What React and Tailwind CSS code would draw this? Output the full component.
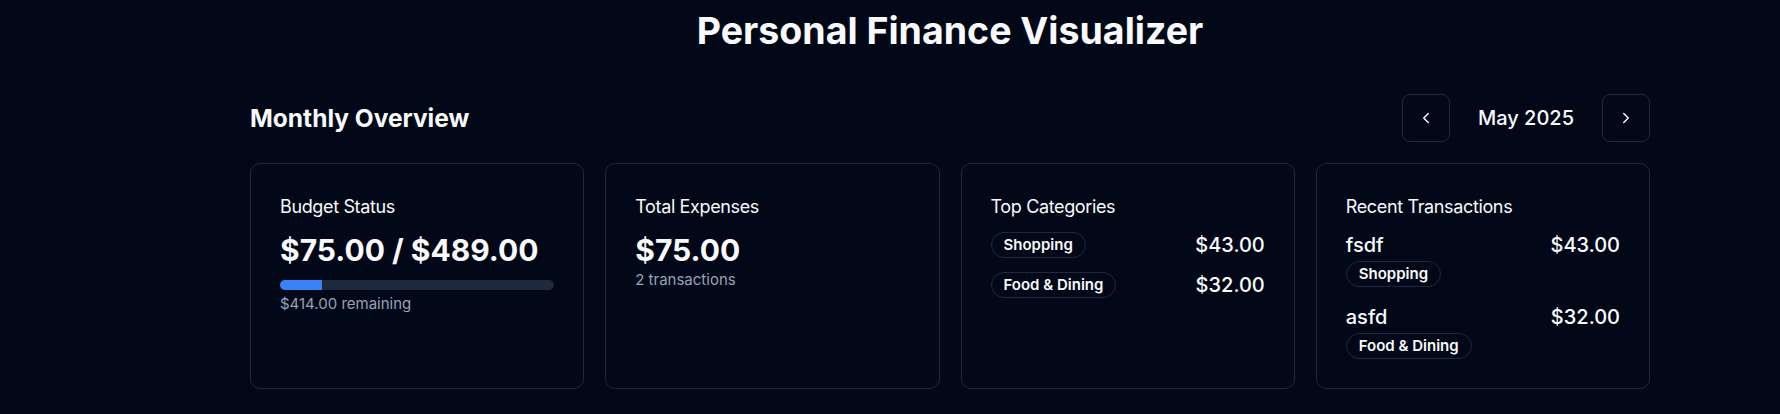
import React from "react";
import { ChevronLeft, ChevronRight } from "lucide-react";

function Badge({ children }) {
  return (
    <span className="inline-flex items-center rounded-full border border-[#1e293b] px-3 py-[2px] text-[15px] leading-5 font-semibold text-[#f8fafc]">
      {children}
    </span>
  );
}

function Card({ title, children }) {
  return (
    <div className="rounded-[10px] border border-[#1e293b] p-[29px]">
      <div className="text-lg leading-7 font-normal tracking-[-0.02em] text-[#f8fafc]">{title}</div>
      {children}
    </div>
  );
}

export default function App() {
  const spent = 75;
  const budget = 489;
  const pct = (spent / budget) * 100;
  return (
    <div className="min-h-screen bg-[#020817] text-[#f8fafc] font-[Inter,sans-serif] pl-[120px]">
      <div className="mx-auto max-w-[1400px]">
        <h1 className="pt-2 text-center text-[37.5px] leading-[46px] font-bold">
          Personal Finance Visualizer
        </h1>
        <div className="mt-10 flex h-12 items-center justify-between">
          <h2 className="text-[24.5px] leading-8 font-bold">Monthly Overview</h2>
          <div className="flex items-center">
            <button className="flex h-12 w-12 items-center justify-center rounded-lg border border-[#1e293b]">
              <ChevronLeft size={18} strokeWidth={2} />
            </button>
            <span className="mx-7 text-xl leading-7 font-medium">May 2025</span>
            <button className="flex h-12 w-12 items-center justify-center rounded-lg border border-[#1e293b]">
              <ChevronRight size={18} strokeWidth={2} />
            </button>
          </div>
        </div>
        <div className="mt-[21px] grid grid-cols-4 gap-[21px]">
          <Card title="Budget Status">
            <div className="mt-[11px] text-3xl leading-9 font-bold">$75.00 / $489.00</div>
            <div className="mt-3 h-2.5 w-full overflow-hidden rounded-full bg-[#1e293b]">
              <div className="h-full bg-[#3b82f6]" style={{ width: `${pct}%` }} />
            </div>
            <div className="mt-1 text-[15px] leading-5 text-[#94a3b8]">$414.00 remaining</div>
          </Card>
          <Card title="Total Expenses">
            <div className="mt-[11px] text-3xl leading-9 font-bold">$75.00</div>
            <div className="mt-0.5 text-[15px] leading-5 text-[#94a3b8]">2 transactions</div>
          </Card>
          <Card title="Top Categories">
            <div className="mt-[10px] flex flex-col gap-3">
              <div className="flex h-7 items-center justify-between">
                <Badge>Shopping</Badge>
                <span className="text-xl leading-7 font-medium">$43.00</span>
              </div>
              <div className="flex h-7 items-center justify-between">
                <Badge>Food &amp; Dining</Badge>
                <span className="text-xl leading-7 font-medium">$32.00</span>
              </div>
            </div>
          </Card>
          <Card title="Recent Transactions">
            <div className="mt-[10px] flex flex-col gap-4">
              <div>
                <div className="flex items-center justify-between text-xl leading-7 font-medium">
                  <span>fsdf</span>
                  <span>$43.00</span>
                </div>
                <div className="mt-[2px]">
                  <Badge>Shopping</Badge>
                </div>
              </div>
              <div>
                <div className="flex items-center justify-between text-xl leading-7 font-medium">
                  <span>asfd</span>
                  <span>$32.00</span>
                </div>
                <div className="mt-[2px]">
                  <Badge>Food &amp; Dining</Badge>
                </div>
              </div>
            </div>
          </Card>
        </div>
      </div>
    </div>
  );
}
